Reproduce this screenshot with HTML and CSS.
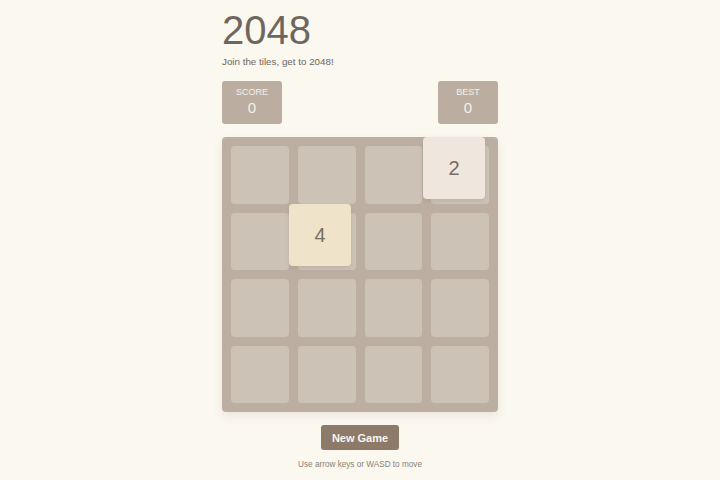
FILE: index.html
```html
<!DOCTYPE html>
<html lang="en">
<head>
    <meta charset="UTF-8">
    <meta name="viewport" content="width=device-width, initial-scale=1.0">
    <title>2048</title>
    <link rel="stylesheet" href="styles.css">
</head>
<body>
    <div class="container">
        <h1 class="title">2048</h1>
        <p class="intro">Join the tiles, get to 2048!</p>
        <div class="scores">
            <div class="score-box">
                <div class="score-label">SCORE</div>
                <div class="score-value">0</div>
            </div>
            <div class="score-box">
                <div class="score-label">BEST</div>
                <div class="score-value">0</div>
            </div>
        </div>
        <div class="board">
            <div class="cell"></div><div class="cell"></div><div class="cell"></div><div class="cell"></div>
            <div class="cell"></div><div class="cell"></div><div class="cell"></div><div class="cell"></div>
            <div class="cell"></div><div class="cell"></div><div class="cell"></div><div class="cell"></div>
            <div class="cell"></div><div class="cell"></div><div class="cell"></div><div class="cell"></div>
            <!-- tiles sit on top of the grid -->
            <div class="tile tile-2 pos-0-3">2</div>
            <div class="tile tile-4 pos-1-1">4</div>
        </div>
        <div class="actions">
            <button class="new-game">New Game</button>
            <p class="hint">Use arrow keys or WASD to move</p>
        </div>
    </div>
</body>
</html>
```

FILE: styles.css
```css
body {
    margin: 0;
    background-color: #fbf8f0;
    font-family: "Liberation Sans", Arial, sans-serif;
    color: #776e65;
}

.container {
    width: 276px;
    margin: 0 auto;
    padding-top: 8px;
}

.title {
    margin: 0;
    font-size: 40px;
    font-weight: normal;
    line-height: 44px;
    color: #6e6760;
}

.intro {
    margin: 4px 0 0;
    font-size: 9.8px;
    line-height: 12px;
    color: #6e6760;
}

.scores {
    display: flex;
    justify-content: space-between;
    margin-top: 13px;
}

.score-box {
    width: 60px;
    height: 43px;
    background-color: #bbaea1;
    border-radius: 3px;
    color: #f6f0e8;
    text-align: center;
    padding-top: 6px;
    box-sizing: border-box;
}

.score-label {
    font-size: 9px;
    line-height: 11px;
}

.score-value {
    font-size: 15px;
    line-height: 20px;
}

.board {
    position: relative;
    margin-top: 13px;
    height: 275px;
    padding: 9px;
    box-sizing: border-box;
    background-color: #bcafa2;
    border-radius: 4px;
    display: grid;
    grid-template-columns: repeat(4, 1fr);
    grid-template-rows: repeat(4, 1fr);
    gap: 9px;
    box-shadow: 0 4px 10px rgba(120, 100, 80, 0.12);
}

.cell {
    background-color: #cdc2b6;
    border-radius: 4px;
}

.tile {
    position: absolute;
    width: 62px;
    height: 62px;
    border-radius: 4px;
    display: flex;
    align-items: center;
    justify-content: center;
    font-size: 20px;
    color: #776e65;
    box-shadow: 0 2px 4px rgba(90, 70, 50, 0.12);
}

.tile-2 {
    background-color: #efe6dd;
}

.tile-4 {
    background-color: #efe3c9;
}

.pos-0-3 {
    top: 0;
    left: 201px;
}

.pos-1-1 {
    top: 67px;
    left: 67px;
}

.actions {
    display: flex;
    flex-direction: column;
    align-items: center;
    margin-top: 13px;
}

.new-game {
    width: 78px;
    height: 25px;
    border: none;
    border-radius: 3px;
    background-color: #8d7a68;
    color: #f9f6f2;
    font-family: "Liberation Sans", Arial, sans-serif;
    font-size: 11px;
    font-weight: bold;
    cursor: pointer;
}

.hint {
    margin: 9px 0 0;
    font-size: 8.2px;
    line-height: 12px;
    color: #8a8178;
}
```
